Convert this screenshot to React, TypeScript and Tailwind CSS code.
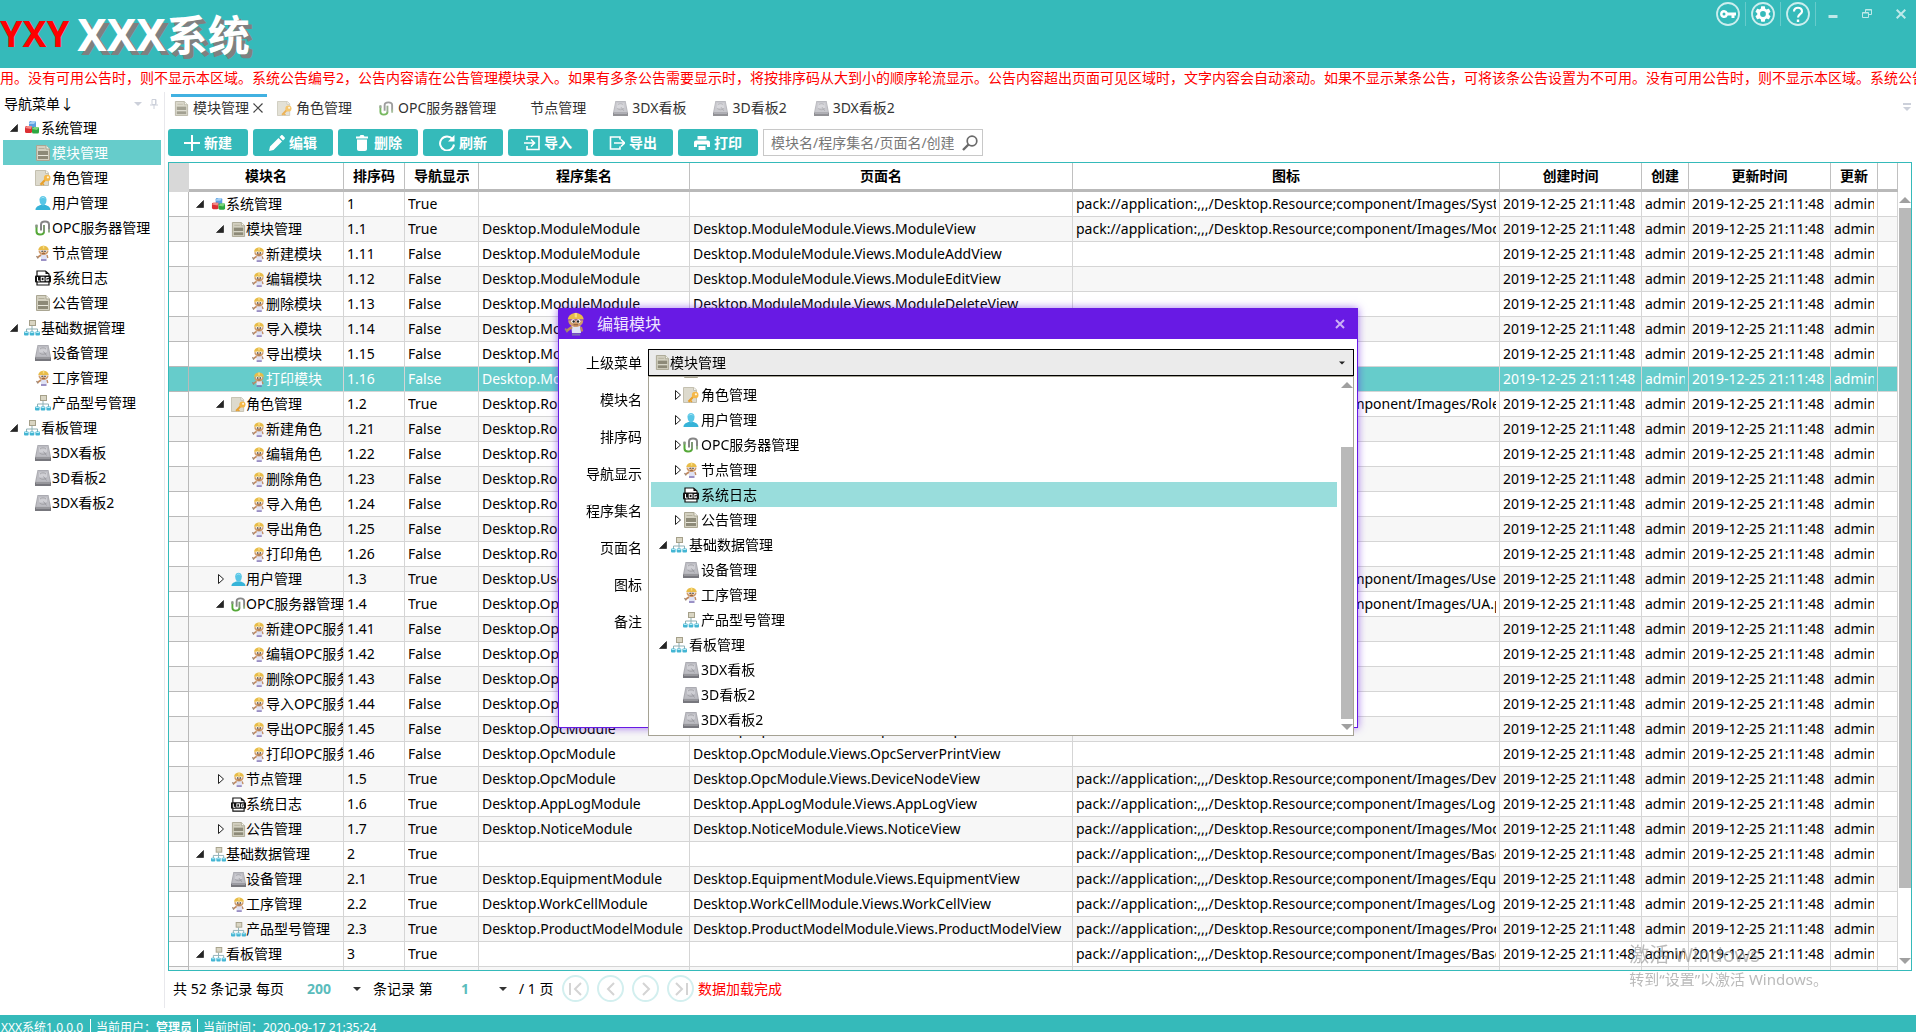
import type { ReactNode } from "react";

type IconName = "cubes" | "doc" | "role" | "user" | "opc" | "worker" | "log" | "org" | "disk";

function TreeIcon({ name, className = "size-4" }: { name: IconName; className?: string }) {
  const shapes: Record<IconName, ReactNode> = {
    cubes: (
      <>
        <rect x="5" y="1" width="7" height="7" rx="1.5" fill="#5b9fe0" />
        <path d="M5 3l3-2h4l-2 3H5z" fill="#a5d0f5" />
        <rect x="1" y="6" width="7" height="7" rx="1.5" fill="#dc2f33" />
        <path d="M1 8l2-2h5l-1 3z" fill="#f38a86" />
        <rect x="8" y="7" width="7" height="6.500" rx="1.500" fill="#2da840" />
        <path d="M8 9l2-2h5l-2 3z" fill="#7cd67e" />
      </>
    ),
    doc: (
      <>
        <path d="M1.500.5H11l3.500 3.500v11.500h-13z" fill="#d3d0c0" stroke="#aaa693" />
        <path d="M11 .5V4h3.500" fill="#f6f4ea" stroke="#aaa693" />
        <path d="M3.500 3.500h6" stroke="#b3af9c" />
        <rect x="3" y="6" width="10" height="4" fill="#8d8a78" />
        <path d="M3 10.500h10" stroke="#eae8dc" />
        <rect x="3" y="11" width="10" height="3" fill="#8d8a78" />
      </>
    ),
    role: (
      <>
        <path d="M.5.5H11L13.500 3v12.500H.5z" fill="#dddacd" stroke="#c4c0b0" />
        <path d="M10.500.5v3h3" fill="#f9f8f3" stroke="#c4c0b0" />
        <path d="M10.500 9.500L5.500 14.800" stroke="#e8a02c" strokeWidth="2.200" />
        <path d="M7.500 13.500l1.500 1.500" stroke="#e8a02c" strokeWidth="1.500" />
        <circle cx="12.200" cy="8" r="3.300" fill="#f5b848" />
        <circle cx="12.900" cy="7.300" r="1.100" fill="#fff6dc" />
      </>
    ),
    user: (
      <>
        <path d="M.5 15c0-3.500 3-4 5-5h5c2 1 5 1.500 5 5z" fill="#36b3d8" />
        <path d="M4.500 4.500C4.500-.3 11.500-.3 11.500 4.500c0 3.500-1.500 6-3.500 6s-3.500-2.500-3.500-6z" fill="#58c6e6" />
        <path d="M6 3.500c1-1.700 3-1.700 4 0" stroke="#a6e3f4" fill="none" />
      </>
    ),
    opc: (
      <g fill="none" strokeWidth="2">
        <path d="M1.500 5v6.500c0 2 1 3 3.500 3s4-1 4-3" stroke="#55a838" />
        <path d="M1.500 4.500v3" stroke="#8a8f88" />
        <path d="M9 12V5" stroke="#7f9a76" />
        <path d="M6 10.500V4.500c0-2 1-3 4-3s4 1 4 3v6" stroke="#858585" />
        <path d="M14 9v3.500" stroke="#8fae84" />
      </g>
    ),
    worker: (
      <>
        <path d="M5.500 9h6l.5 5H6z" fill="#dfe2f5" />
        <path d="M6 15h5.500" stroke="#7a6cb2" strokeWidth="1.500" />
        <path d="M6 10L2.500 12.500" stroke="#c08a60" strokeWidth="1.800" />
        <path d="M12 10l.8 3" stroke="#c08a60" strokeWidth="1.400" />
        <path d="M1.500 11l1.500 2.500" stroke="#9a8574" strokeWidth="1.200" />
        <path d="M3.500 5.500h10c0 6-10 6-10 0z" fill="#d09c6c" />
        <path d="M3.200 5C3.800-.8 13.200-.8 13.800 5z" fill="#e8bc48" />
        <path d="M7.800.6h1.500v3H7.800z" fill="#f8de86" />
        <circle cx="6.800" cy="6.200" r="1.300" fill="#fff" />
        <circle cx="10.300" cy="6.200" r="1.300" fill="#fff" />
        <circle cx="7.100" cy="6.300" r=".8" fill="#222" />
        <circle cx="10" cy="6.300" r=".8" fill="#222" />
        <path d="M7 8.500h3" stroke="#8e5b3a" strokeWidth=".8" />
      </>
    ),
    log: (
      <>
        <path d="M2 6V1h8.500L14 4v2M2 12v3h12v-3" fill="#fff" stroke="#111" strokeWidth="1.200" />
        <path d="M10.500 1v3H14z" fill="#111" />
        <rect x="0" y="5.500" width="16" height="7" rx="1" fill="#111" />
        <path d="M2.500 7v4h2.200" fill="none" stroke="#fff" />
        <rect x="6.200" y="7.300" width="2.800" height="3.400" fill="none" stroke="#fff" />
        <path d="M13.700 7.500h-2.600v3.200h2.300V9.300h-1" fill="none" stroke="#fff" />
      </>
    ),
    org: (
      <>
        <path d="M8 6v3M2.500 12V9h11v3M8 9v3" fill="none" stroke="#8fb0b5" />
        <rect x="5.500" y=".5" width="6" height="5" fill="#d9d5c3" stroke="#a5a08a" />
        <rect x="0" y="11.500" width="4.600" height="4" rx="1" fill="#43b5d3" />
        <rect x="5.700" y="11.500" width="4.600" height="4" rx="1" fill="#43b5d3" />
        <rect x="11.400" y="11.500" width="4.600" height="4" rx="1" fill="#43b5d3" />
        <path d="M.8 12.500h3M6.500 12.500h3M12.200 12.500h3" stroke="#b6ecf7" />
      </>
    ),
    disk: (
      <>
        <path d="M2.500 0h11L16 12.500V16H0v-3.500z" fill="#a6a6ac" />
        <path d="M3 .8h10l1.800 11H1.200z" fill="#bcbcc2" />
        <path d="M4 2.500h8v5H4z" fill="#cfcfd4" />
        <path d="M5 4c1.500-1.500 4.500-1.500 6 0M4.500 8c2 1.800 5 1.800 7 0" fill="none" stroke="#9a9aa0" strokeWidth=".8" />
        <path d="M8.500 6.500l3 4" stroke="#94949a" strokeWidth=".8" />
        <path d="M0 12.500h16V16H0z" fill="#77777d" />
        <path d="M1 13.200h14" stroke="#b2b2b8" strokeWidth=".8" />
      </>
    ),
  };
  return (
    <svg viewBox="0 0 16 16" className={`${className} shrink-0`} aria-hidden="true">
      {shapes[name]}
    </svg>
  );
}

function Expander({ open }: { open: boolean }) {
  return (
    <svg viewBox="0 0 8 10" className={`h-2.5 w-2 shrink-0 ${open ? "" : "ml-px"}`} aria-hidden="true">
      {open ? (
        <path d="M7.500 1.500v7h-7z" fill="#262626" stroke="#111" strokeWidth=".6" />
      ) : (
        <path d="M1.500.5L6.500 5l-5 4.500z" fill="#fff" stroke="#222" />
      )}
    </svg>
  );
}

function DownArrow({ className }: { className: string }) {
  return (
    <svg viewBox="0 0 12 6" className={className} aria-hidden="true">
      <path d="M0 0h12L6 6z" fill="currentColor" />
    </svg>
  );
}

type Row = {
  name: string;
  icon: IconName;
  level: number;
  code: string;
  nav: boolean;
  open?: boolean;
  mod?: string;
  view?: string;
  image?: string;
  selected?: boolean;
};

const actions = [
  ["新建", "Add"],
  ["编辑", "Edit"],
  ["删除", "Delete"],
  ["导入", "Import"],
  ["导出", "Export"],
  ["打印", "Print"],
];

function actionRows(suffix: string, code: string, mod: string, entity: string, selected = -1): Row[] {
  return actions.map(([label, verb], i) => ({
    name: label + suffix,
    icon: "worker",
    level: 2,
    code: `${code}${i + 1}`,
    nav: false,
    mod,
    view: `${mod}.Views.${entity}${verb}View`,
    selected: i === selected,
  }));
}

const rows: Row[] = [
  { name: "系统管理", icon: "cubes", level: 0, code: "1", nav: true, open: true, image: "System" },
  { name: "模块管理", icon: "doc", level: 1, code: "1.1", nav: true, open: true, mod: "Desktop.ModuleModule", view: "Desktop.ModuleModule.Views.ModuleView", image: "Module" },
  ...actionRows("模块", "1.1", "Desktop.ModuleModule", "Module", 5),
  { name: "角色管理", icon: "role", level: 1, code: "1.2", nav: true, open: true, mod: "Desktop.RoleModule", view: "Desktop.RoleModule.Views.RoleView", image: "Role" },
  ...actionRows("角色", "1.2", "Desktop.RoleModule", "Role"),
  { name: "用户管理", icon: "user", level: 1, code: "1.3", nav: true, open: false, mod: "Desktop.UserModule", view: "Desktop.UserModule.Views.UserView", image: "User" },
  { name: "OPC服务器管理", icon: "opc", level: 1, code: "1.4", nav: true, open: true, mod: "Desktop.OpcModule", view: "Desktop.OpcModule.Views.OpcServerView", image: "UA" },
  ...actionRows("OPC服务器", "1.4", "Desktop.OpcModule", "OpcServer"),
  { name: "节点管理", icon: "worker", level: 1, code: "1.5", nav: true, open: false, mod: "Desktop.OpcModule", view: "Desktop.OpcModule.Views.DeviceNodeView", image: "DeviceNode" },
  { name: "系统日志", icon: "log", level: 1, code: "1.6", nav: true, mod: "Desktop.AppLogModule", view: "Desktop.AppLogModule.Views.AppLogView", image: "Log" },
  { name: "公告管理", icon: "doc", level: 1, code: "1.7", nav: true, open: false, mod: "Desktop.NoticeModule", view: "Desktop.NoticeModule.Views.NoticeView", image: "Module" },
  { name: "基础数据管理", icon: "org", level: 0, code: "2", nav: true, open: true, image: "Base" },
  { name: "设备管理", icon: "disk", level: 1, code: "2.1", nav: true, mod: "Desktop.EquipmentModule", view: "Desktop.EquipmentModule.Views.EquipmentView", image: "Equipment" },
  { name: "工序管理", icon: "worker", level: 1, code: "2.2", nav: true, mod: "Desktop.WorkCellModule", view: "Desktop.WorkCellModule.Views.WorkCellView", image: "Log" },
  { name: "产品型号管理", icon: "org", level: 1, code: "2.3", nav: true, mod: "Desktop.ProductModelModule", view: "Desktop.ProductModelModule.Views.ProductModelView", image: "Product" },
  { name: "看板管理", icon: "org", level: 0, code: "3", nav: true, open: true, image: "Base" },
];

type Node = { name: string; icon: IconName; root?: boolean; closed?: boolean };

const menu: Node[] = [
  { name: "系统管理", icon: "cubes", root: true },
  { name: "模块管理", icon: "doc" },
  { name: "角色管理", icon: "role", closed: true },
  { name: "用户管理", icon: "user", closed: true },
  { name: "OPC服务器管理", icon: "opc", closed: true },
  { name: "节点管理", icon: "worker", closed: true },
  { name: "系统日志", icon: "log" },
  { name: "公告管理", icon: "doc", closed: true },
  { name: "基础数据管理", icon: "org", root: true },
  { name: "设备管理", icon: "disk" },
  { name: "工序管理", icon: "worker" },
  { name: "产品型号管理", icon: "org" },
  { name: "看板管理", icon: "org", root: true },
  { name: "3DX看板", icon: "disk" },
  { name: "3D看板2", icon: "disk" },
  { name: "3DX看板2", icon: "disk" },
];

const indents = ["pl-[7px]", "pl-[27px]", "pl-[47px]"];

function Cell({ children }: { children?: ReactNode }) {
  return (
    <td className="h-[25px] border-r border-b border-[#d5d5d5] px-[3px] py-0">
      <div className="overflow-hidden leading-5 whitespace-nowrap">{children}</div>
    </td>
  );
}

const headers = ["模块名", "排序码", "导航显示", "程序集名", "页面名", "图标", "创建时间", "创建", "更新时间", "更新", ""];

function ModuleTable() {
  return (
    <table className="w-full table-fixed border-separate border-spacing-0">
      <colgroup>
        <col className="w-5" />
        <col className="w-[155px]" />
        <col className="w-[61px]" />
        <col className="w-[74px]" />
        <col className="w-[211px]" />
        <col className="w-[383px]" />
        <col />
        <col className="w-[142px]" />
        <col className="w-[47px]" />
        <col className="w-[142px]" />
        <col className="w-[47px]" />
        <col className="w-5" />
      </colgroup>
      <thead>
        <tr>
          <th className="h-[29px] bg-[#d8d8d8] p-0" />
          {headers.map((h, i) => (
            <th key={i} className="h-[29px] border-r border-b-3 border-r-[#c0c0c0] border-b-[#b9b9b9] px-[9px] py-0 font-bold">
              <div className="overflow-hidden leading-5 whitespace-nowrap">{h}</div>
            </th>
          ))}
        </tr>
      </thead>
      <tbody>
        {rows.map((r, i) => {
          const time = "2019-12-25 21:11:48";
          return (
            <tr key={i} className={r.selected ? "bg-[#66cccb] text-white" : "odd:bg-white even:bg-[#f7f7f7]"}>
              <td className="border-r border-b border-[#b9b9b9] p-0" />
              <td className="h-[25px] border-r border-b border-[#d5d5d5] py-0 pr-0">
                <div className={`flex items-center overflow-hidden leading-5 whitespace-nowrap ${indents[r.level]}`}>
                  <span className="flex w-[15px] shrink-0">{r.open !== undefined && <Expander open={r.open} />}</span>
                  <TreeIcon name={r.icon} className="size-[15px]" />
                  {r.name}
                </div>
              </td>
              <Cell>{r.code}</Cell>
              <Cell>{r.nav ? "True" : "False"}</Cell>
              <Cell>{r.mod}</Cell>
              <Cell>{r.view}</Cell>
              <Cell>{r.image && `pack://application:,,,/Desktop.Resource;component/Images/${r.image}.png`}</Cell>
              <Cell>{time}</Cell>
              <Cell>admin</Cell>
              <Cell>{time}</Cell>
              <Cell>admin</Cell>
              <Cell />
            </tr>
          );
        })}
        <tr className="bg-[#f7f7f7]">
          <td className="h-[25px] border-r border-[#b9b9b9] p-0" />
          {headers.map((_, i) => (
            <td key={i} className="border-r border-[#d5d5d5] p-0" />
          ))}
        </tr>
      </tbody>
    </table>
  );
}

function Sidebar() {
  return (
    <nav aria-label="导航菜单" className="mb-[7px] w-[165px] shrink-0 border-r border-[#e8e8ec] pt-px">
      <div className="flex h-[22px] items-center pr-1.5 pl-1">
        <h2 className="flex-1">导航菜单↓</h2>
        <DownArrow className="mr-2 h-1 w-2 text-[#ccd0da]" />
        <svg viewBox="0 0 8 10" className="h-2.5 w-2" fill="none" stroke="#ccd0da" aria-hidden="true">
          <path d="M2 .5h4v5H2zM5.500 1v4M0 6h8M4 6v4" />
        </svg>
      </div>
      <ul>
        {menu.map((m, i) => (
          <li key={i}>
            <a
              href="#"
              className={`flex h-[25px] items-center leading-5 whitespace-nowrap ${m.root ? "pl-2.5" : "mr-[3px] ml-[3px] pl-8"} ${i === 1 ? "bg-[#66cccb] text-white" : ""}`}
            >
              {m.root && (
                <span className="mr-1.5 flex">
                  <Expander open />
                </span>
              )}
              <TreeIcon name={m.icon} className="mr-px size-4" />
              {m.name}
            </a>
          </li>
        ))}
      </ul>
    </nav>
  );
}

const tabs: { name: string; icon?: IconName }[] = [
  { name: "模块管理", icon: "doc" },
  { name: "角色管理", icon: "role" },
  { name: "OPC服务器管理", icon: "opc" },
  { name: "节点管理" },
  { name: "3DX看板", icon: "disk" },
  { name: "3D看板2", icon: "disk" },
  { name: "3DX看板2", icon: "disk" },
];

function Tabs() {
  return (
    <div className="flex h-[27px] items-start pl-[3px] text-[#333]">
      <div role="tablist" className="flex flex-1">
        {tabs.map((t, i) => (
          <button
            key={t.name}
            type="button"
            role="tab"
            aria-selected={i === 0}
            className={`flex h-[25px] items-center border-t-3 pl-[3px] whitespace-nowrap ${i === 0 ? "mr-[7px] border-[#41b1e1] pr-1" : "border-transparent pr-6"}`}
          >
            {t.icon ? <TreeIcon name={t.icon} className="mr-1 size-[15px] opacity-80" /> : <span className="w-[7px]" />}
            {t.name}
            {i === 0 && (
              <svg viewBox="0 0 10 10" className="ml-1 size-2.5" stroke="#444" strokeWidth="1.200" aria-hidden="true">
                <path d="M.5.5l9 9M9.500.5l-9 9" />
              </svg>
            )}
          </button>
        ))}
      </div>
      <svg viewBox="0 0 8 8" className="mt-[9px] mr-px size-2" fill="#ccd0da" aria-hidden="true">
        <path d="M0 0h8v2H0zM0 4h8L4 8z" />
      </svg>
    </div>
  );
}

const tools: { label: string; icon: ReactNode }[] = [
  { label: "新建", icon: <path d="M8 0v16M0 8h16" stroke="#fff" strokeWidth="2" /> },
  { label: "编辑", icon: <path d="M0 16l1-4.500L9.500 3 13 6.500 4.500 15zM10.500 2L12 .5c.6-.6 1.200-.6 1.800 0l1.700 1.700c.6.600.6 1.200 0 1.800L14 5.500z" fill="#fff" /> },
  { label: "删除", icon: <path d="M2 1.500h3.500L6.500 0h3l1 1.500H14V3.500H2zM3 4.500h10V14c0 1.200-.8 2-2 2H5c-1.200 0-2-.8-2-2z" fill="#fff" /> },
  {
    label: "刷新",
    icon: (
      <>
        <path d="M13.500 4A7 7 0 1 0 15 9.500" fill="none" stroke="#fff" strokeWidth="2" />
        <path d="M15.500 0v6.500H9z" fill="#fff" />
      </>
    ),
  },
  { label: "导入", icon: <path d="M3 5V1.500h12v13H3V11M0 8h10M7 4.500L10.500 8 7 11.500" fill="none" stroke="#fff" strokeWidth="1.600" /> },
  { label: "导出", icon: <path d="M11 4.500V2H1.500v12H11v-2.500M5 8h10M12 4.500L15.500 8 12 11.500" fill="none" stroke="#fff" strokeWidth="1.600" /> },
  {
    label: "打印",
    icon: (
      <>
        <path d="M3.500 1h9v3.500h-9zM2 5.500h12c1.200 0 2 .8 2 2V12h-3V9.500H3V12H0V7.500c0-1.200.8-2 2-2z" fill="#fff" />
        <path d="M4.500 11h7v4h-7z" fill="#fff" />
      </>
    ),
  },
];

function Toolbar() {
  return (
    <div className="mt-2 mb-1.5 flex gap-[5px]">
      {tools.map((t) => (
        <button key={t.label} type="button" className="flex h-[27px] w-20 items-center justify-center gap-1 rounded-[3px] bg-[#35baba] font-bold text-white">
          <svg viewBox="0 0 16 16" className="size-4" aria-hidden="true">
            {t.icon}
          </svg>
          {t.label}
        </button>
      ))}
      <div className="flex h-[27px] w-[220px] items-center border border-[#c8c8c8] pr-1 pl-[7px]">
        <input aria-label="搜索" placeholder="模块名/程序集名/页面名/创建" className="min-w-0 flex-1 outline-none placeholder:text-[#777]" />
        <button type="button" aria-label="查询" className="ml-2">
          <svg viewBox="0 0 16 16" className="size-4" fill="none" stroke="#6a6a6a" strokeWidth="1.700" aria-hidden="true">
            <circle cx="10" cy="6" r="4.800" />
            <path d="M6.500 9.500L1 15" strokeWidth="2.400" />
          </svg>
        </button>
      </div>
    </div>
  );
}

function PageSelect({ label, value, className }: { label: string; value: string; className: string }) {
  return (
    <div className={`relative ${className}`}>
      <select aria-label={label} className="w-full appearance-none bg-transparent pl-3 font-bold text-[#5bbcbc] outline-none">
        <option>{value}</option>
      </select>
      <DownArrow className="pointer-events-none absolute top-2 right-1 h-1 w-2 text-[#333]" />
    </div>
  );
}

const pageButtons = [
  { label: "首页", d: "M1 1v12M12 1L6 7l6 6" },
  { label: "上一页", d: "M10 1L4 7l6 6" },
  { label: "下一页", d: "M4 1l6 6-6 6" },
  { label: "末页", d: "M2 1l6 6-6 6M13 1v12" },
];

function Pager() {
  return (
    <div className="flex h-[35px] items-center pl-[5px] whitespace-nowrap">
      <span className="w-[122px]">共 52 条记录 每页</span>
      <PageSelect label="每页记录数" value="200" className="w-[70px]" />
      <span className="ml-2 w-[76px]">条记录 第</span>
      <PageSelect label="页码" value="1" className="w-[62px]" />
      <span className="ml-2 w-[43px]">/ 1 页</span>
      <div className="flex gap-2">
        {pageButtons.map((b) => (
          <button key={b.label} type="button" aria-label={b.label} className="flex size-[27px] items-center justify-center rounded-full border-2 border-[#d3efef]">
            <svg viewBox="0 0 14 14" className="size-3.5" fill="none" stroke="#d4d4d4" strokeWidth="2" aria-hidden="true">
              <path d={b.d} />
            </svg>
          </button>
        ))}
      </div>
      <span className="ml-1 text-[#ff0000]">数据加载完成</span>
    </div>
  );
}

const fields = ["模块名", "排序码", "导航显示", "程序集名", "页面名", "图标", "备注"];

function EditDialog() {
  return (
    <div className="pointer-events-none fixed inset-0 flex items-start justify-center pt-[308px]">
      <section
        role="dialog"
        aria-labelledby="dialog-title"
        className="pointer-events-auto h-[420px] w-[800px] border border-[#681ae4] bg-white shadow-[0_0_8px_#681ae499]"
      >
        <header className="flex h-[30px] items-center bg-[#681ae4] pr-3 pl-1 text-white">
          <TreeIcon name="worker" className="size-6" />
          <h2 id="dialog-title" className="ml-2.5 flex-1 text-base text-[#eee4ff]">
            编辑模块
          </h2>
          <button type="button" aria-label="关闭">
            <svg viewBox="0 0 10 10" className="size-2.5" stroke="#cbb0f6" strokeWidth="2" aria-hidden="true">
              <path d="M1 1l8 8M9 1L1 9" />
            </svg>
          </button>
        </header>
        <div className="flex pt-[10px]">
          <div className="w-[83px] text-right">
            <div id="parent-label" className="h-[37px] leading-[27px]">
              上级菜单
            </div>
            {fields.map((f) => (
              <div key={f} className="h-[37px] leading-[27px]">
                {f}
              </div>
            ))}
          </div>
          <div className="relative mr-[3px] ml-1.5 flex-1">
            <button
              type="button"
              role="combobox"
              aria-labelledby="parent-label"
              aria-expanded="true"
              aria-controls="parent-list"
              className="flex h-[27px] w-full items-center border border-black bg-[#ebebeb] pr-2 pl-1.5 text-left"
            >
              <TreeIcon name="doc" className="size-[15px]" />
              <span className="flex-1">模块管理</span>
              <DownArrow className="h-1 w-1.5 text-[#222]" />
            </button>
            <div className="absolute top-[27px] right-0 left-0 flex h-[360px] justify-between border border-[#a5a294] bg-white">
              <ul id="parent-list" role="listbox" aria-labelledby="parent-label" className="ml-0.5 w-[686px] overflow-hidden">
                {menu.slice(1).map((m, i) => (
                  <li
                    key={i}
                    role="option"
                    aria-selected={m.name === "系统日志"}
                    className={`flex h-[25px] items-center leading-5 first:-mt-5 ${m.root ? "pl-2" : "pl-[22px]"} ${m.name === "系统日志" ? "bg-[#99dddc]" : ""}`}
                  >
                    <span className={`flex shrink-0 ${m.root ? "w-3" : "w-2.5"}`}>{(m.root || m.closed) && <Expander open={!!m.root} />}</span>
                    <TreeIcon name={m.icon} className="mr-0.5 size-4" />
                    {m.name}
                  </li>
                ))}
              </ul>
              <div className="flex w-3 flex-col items-center pt-[5px] pb-[5px] text-[#a0a0a0]">
                <DownArrow className="h-1.5 w-3 rotate-180" />
                <div className="mt-[59px] mb-[5px] w-full flex-1 bg-[#b9b9b9]" />
                <DownArrow className="h-1.5 w-3" />
              </div>
            </div>
          </div>
        </div>
      </section>
    </div>
  );
}

const notice =
  "用。没有可用公告时，则不显示本区域。系统公告编号2，公告内容请在公告管理模块录入。如果有多条公告需要显示时，将按排序码从大到小的顺序轮流显示。公告内容超出页面可见区域时，文字内容会自动滚动。如果不显示某条公告，可将该条公告设置为不可用。没有可用公告时，则不显示本区域。系统公告编号2，公告内容请在公告管理模块录入。";

export default function App() {
  return (
    <div className="flex h-screen flex-col overflow-hidden bg-white font-['Noto_Sans','Noto_Sans_CJK_SC',sans-serif] text-sm leading-5 text-black">
      <header className="flex h-[68px] shrink-0 items-start justify-between bg-[#35baba]">
        <h1 className="flex h-[68px] items-center font-bold whitespace-nowrap">
          <span className="text-4xl text-[#ff0000]">YXY</span>
          <span className="ml-2 text-[42px] text-white [text-shadow:4px_4px_0_#808080]">
            <span className="text-[44px]">XXX</span>系统
          </span>
        </h1>
        <div className="mt-0.5 flex items-center pr-2.5">
          <div className="flex items-center divide-x divide-white/25">
            <button type="button" aria-label="修改密码" className="pr-[5px]">
              <svg viewBox="0 0 24 24" className="size-6" aria-hidden="true">
                <circle cx="12" cy="12" r="11" fill="none" stroke="#fff" strokeOpacity=".75" strokeWidth="1.800" />
                <path fillRule="evenodd" fill="#fff" d="M8 8a4 4 0 0 1 3.800 2.500H20v3h-1.500V16h-3v-2.500h-3.700A4 4 0 1 1 8 8zm0 2.500a1.500 1.500 0 1 0 0 3 1.500 1.500 0 0 0 0-3z" />
              </svg>
            </button>
            <button type="button" aria-label="设置" className="px-[5px]">
              <svg viewBox="0 0 24 24" className="size-6" aria-hidden="true">
                <circle cx="12" cy="12" r="11" fill="none" stroke="#fff" strokeOpacity=".75" strokeWidth="1.800" />
                <path
                  transform="translate(2.400 2.400) scale(.8)"
                  fill="#fff"
                  d="M19.140 12.940c.04-.3.060-.61.060-.94 0-.32-.02-.64-.07-.94l2.030-1.580c.18-.14.230-.41.120-.61l-1.920-3.320c-.12-.22-.37-.29-.59-.22l-2.390.960c-.5-.38-1.030-.7-1.620-.94l-.36-2.540c-.04-.24-.24-.41-.48-.41h-3.840c-.24 0-.43.170-.47.410l-.36 2.540c-.59.240-1.130.570-1.620.940l-2.390-.96c-.22-.08-.47 0-.59.220L2.740 8.870c-.12.210-.08.470.120.610l2.030 1.580c-.05.300-.09.630-.09.940s.02.640.070.940l-2.030 1.580c-.18.140-.23.410-.12.610l1.920 3.320c.12.220.370.290.590.220l2.390-.96c.5.380 1.030.700 1.620.940l.36 2.540c.05.240.240.410.480.410h3.840c.24 0 .44-.17.470-.41l.36-2.540c.59-.24 1.130-.56 1.620-.94l2.390.96c.22.080.470 0 .590-.22l1.920-3.320c.12-.22.070-.47-.12-.61l-2.010-1.580zM12 15.600A3.600 3.600 0 1 1 12 8.400a3.600 3.600 0 0 1 0 7.200z"
                />
              </svg>
            </button>
            <button type="button" aria-label="帮助" className="px-[5px]">
              <svg viewBox="0 0 24 24" className="size-6" fill="none" stroke="#fff" aria-hidden="true">
                <circle cx="12" cy="12" r="11" strokeOpacity=".75" strokeWidth="1.800" />
                <path d="M8 9.500C8 4.500 16 4.500 16 9.500c0 2.500-4 3-4 6" strokeWidth="2.200" />
                <path d="M12 17.500v2.500" strokeWidth="2.400" />
              </svg>
            </button>
            <span className="h-4" />
          </div>
          <div className="ml-3 flex items-center gap-6">
            <button type="button" aria-label="最小化">
              <svg viewBox="0 0 10 10" className="size-2.5" fill="#bfe9e9" aria-hidden="true">
                <path d="M.5 6h9v3h-9z" />
              </svg>
            </button>
            <button type="button" aria-label="还原">
              <svg viewBox="0 0 10 10" className="size-2.5" fill="none" stroke="#bfe9e9" aria-hidden="true">
                <path d="M.5 3.500h6v5h-6zM.5 4h6M3.500 3V.5h6v5H7M3.500 1h6" />
              </svg>
            </button>
            <button type="button" aria-label="关闭窗口">
              <svg viewBox="0 0 10 10" className="size-2.5" stroke="#bfe9e9" strokeWidth="2" aria-hidden="true">
                <path d="M.7.7l8.600 8.600M9.300.7L.7 9.300" />
              </svg>
            </button>
          </div>
        </div>
      </header>
      <p className="h-6 shrink-0 overflow-hidden whitespace-nowrap text-[#ff0000]">{notice}</p>
      <div className="flex min-h-0 flex-1">
        <Sidebar />
        <main className="flex min-w-0 flex-1 flex-col pt-[2px] pr-1 pb-[9px] pl-[3px]">
          <Tabs />
          <Toolbar />
          <div className="flex min-h-0 flex-1 border border-[#35baba]">
            <div className="min-w-0 flex-1 overflow-hidden">
              <ModuleTable />
            </div>
            <div className="flex w-[13px] flex-col items-center pt-[34px] pb-1.5 text-[#a0a0a0]">
              <DownArrow className="h-1.5 w-3 rotate-180" />
              <div className="mt-[5px] mb-[70px] w-3 flex-1 bg-[#b9b9b9]" />
              <DownArrow className="h-1.5 w-3" />
            </div>
          </div>
          <Pager />
        </main>
      </div>
      <footer className="flex h-[17px] shrink-0 items-start overflow-hidden bg-[#35baba] pl-px text-xs leading-[26px] whitespace-nowrap text-white">
        <span className="w-[89px]">XXX系统1.0.0.0</span>
        <span className="mt-1 h-4 w-[107px] border-l border-white pl-[5px] leading-[18px]">
          当前用户：<b className="font-semibold">管理员</b>
        </span>
        <span className="mt-1 h-4 border-l border-white pl-[5px] leading-[18px]">当前时间：2020-09-17 21:35:24</span>
      </footer>
      <EditDialog />
      <div className="pointer-events-none fixed right-[88px] bottom-[42px] text-[#8c8c8c]/60">
        <p className="text-xl leading-[26px]">激活 Windows</p>
        <p className="text-[15px] leading-[22px]">转到“设置”以激活 Windows。</p>
      </div>
    </div>
  );
}
